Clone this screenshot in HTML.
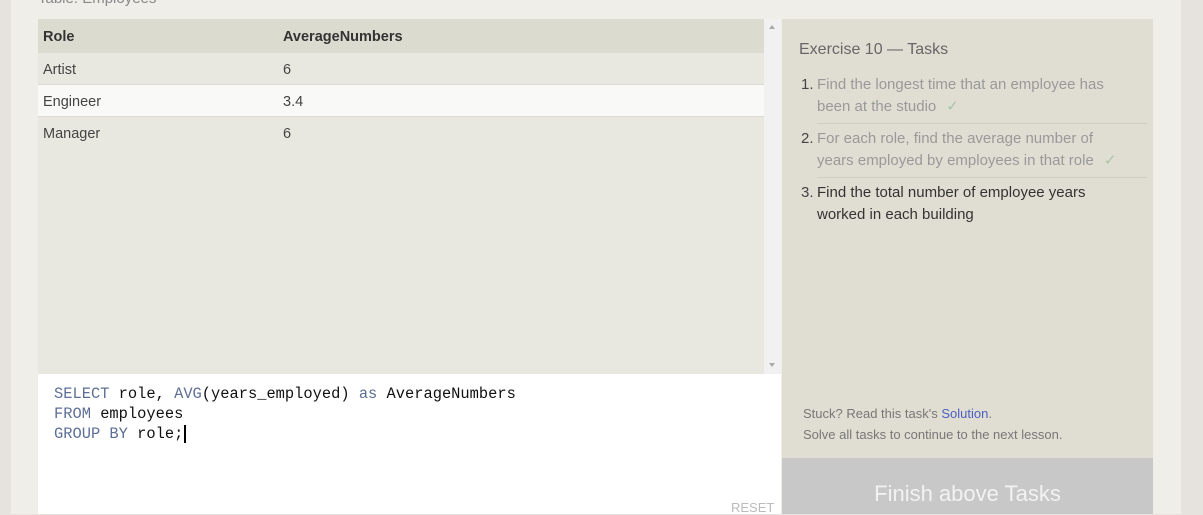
<!DOCTYPE html>
<html><head><meta charset="utf-8"><style>
*{margin:0;padding:0;box-sizing:border-box}
body{width:1203px;height:514px;overflow:hidden;background:#e6e2de;font-family:"Liberation Sans",sans-serif;position:relative}
.wrap{position:absolute;left:11px;top:0;width:1170px;height:514px;background:#f0eee8}
.cap{position:absolute;left:38px;top:-10px;font-size:15px;color:#888}
.tbl{position:absolute;left:38px;top:19px;width:726px;height:355px;background:#e9e8e0}
.row{position:absolute;left:0;width:726px;height:32px;font-size:14.5px;color:#444;border-bottom:1px solid #dcdbd3}
.row span{position:absolute;top:9px}
.c1{left:5px}.c2{left:245px}
.hd{top:0;height:34px;background:#dcdbd0;font-weight:bold;color:#333}
.hd span{top:10px}
.scroll{position:absolute;left:764px;top:19px;width:17px;height:355px;background:#f1f1f1}
.ed{position:absolute;left:38px;top:374px;width:743px;height:140px;background:#fff}
.code{position:absolute;left:16px;top:10px;font-family:"Liberation Mono",monospace;font-size:15.4px;line-height:20px;color:#111;white-space:pre}
.k{color:#5d6f96}
.reset{position:absolute;left:693px;top:126px;font-size:13px;color:#bbb}
.side{position:absolute;left:782px;top:19px;width:371px;height:439px;background:#e0ded3}
.side h3{position:absolute;left:17px;top:22px;font-weight:normal;font-size:16px;color:#666}
.task{position:absolute;left:35px;width:330px;font-size:15px;line-height:22px;color:#999;padding-bottom:5px;padding-right:25px}
.task b{position:absolute;left:-16px;font-weight:normal;color:#444}
.ck{color:#a8c4a8;margin-left:10px}
.sep{border-bottom:1px solid #d0cec4}
.note{position:absolute;left:21px;top:384px;font-size:13px;line-height:21px;color:#777}
.note a{color:#4a5fc1;text-decoration:none}
.btn{position:absolute;left:782px;top:458px;width:371px;height:56px;background:#c8c8c8;color:#f2f2f2;font-size:22px;text-align:center;padding-top:23px}
</style></head><body>
<div class="wrap"></div>
<div class="cap">Table: Employees</div>
<div class="tbl">
<div class="row hd"><span class="c1">Role</span><span class="c2">AverageNumbers</span></div>
<div class="row" style="top:34px"><span class="c1">Artist</span><span class="c2">6</span></div>
<div class="row" style="top:66px;background:#f9f9f8"><span class="c1">Engineer</span><span class="c2">3.4</span></div>
<div class="row" style="top:98px;border-bottom:0"><span class="c1">Manager</span><span class="c2">6</span></div>
</div>
<div class="scroll"><div style="position:absolute;left:5px;top:6px;border:3px solid transparent;border-bottom:4px solid #aaa;border-top:0"></div><div style="position:absolute;left:5px;top:344px;border:3px solid transparent;border-top:4px solid #aaa;border-bottom:0"></div></div>
<div class="ed"><div class="code"><span class="k">SELECT</span> role, <span class="k">AVG</span>(years_employed) <span class="k">as</span> AverageNumbers
<span class="k">FROM</span> employees
<span class="k">GROUP BY</span> role;<span style="border-left:2px solid #000;margin-left:1px"></span></div>
<div class="reset">RESET</div></div>
<div class="side">
<h3>Exercise 10 — Tasks</h3>
<div class="task sep" style="top:55px"><b>1.</b>Find the longest time that an employee has been at the studio<span class="ck">✓</span></div>
<div class="task sep" style="top:109px"><b>2.</b>For each role, find the average number of years employed by employees in that role<span class="ck">✓</span></div>
<div class="task" style="top:163px;color:#333;padding-right:40px"><b>3.</b>Find the total number of employee years worked in each building</div>
<div class="note">Stuck? Read this task's <a>Solution</a>.<br>Solve all tasks to continue to the next lesson.</div>
</div>
<div class="btn">Finish above Tasks</div>
</body></html>
